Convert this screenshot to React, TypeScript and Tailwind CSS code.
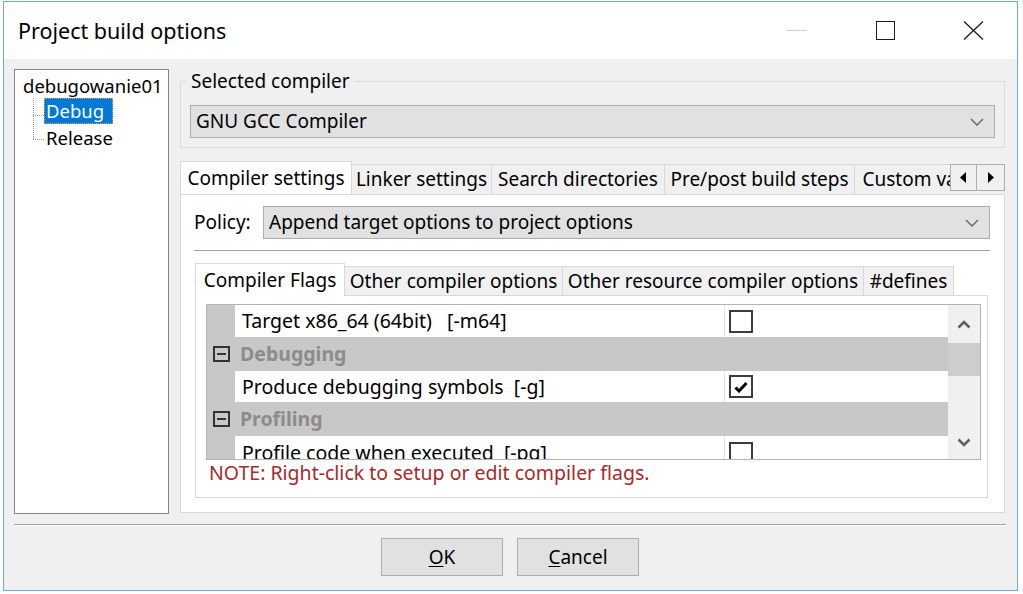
import React from 'react';

const font = "font-['Noto_Sans',sans-serif]";

function ComboChevron() {
  return (
    <svg width="14" height="8" viewBox="0 0 14 8" className="shrink-0">
      <path d="M1 1 L7 7 L13 1" fill="none" stroke="#666" strokeWidth="1.4" />
    </svg>
  );
}

function Combo({ text, className }: { text: string; className?: string }) {
  return (
    <div className={`flex h-[33px] items-center border border-[#adadad] bg-[#e1e1e1] pl-[5px] pr-[10px] ${className ?? ''}`}>
      <span className="flex-1 text-[19px] leading-none text-black">{text}</span>
      <ComboChevron />
    </div>
  );
}

function ScrollChevron({ up }: { up?: boolean }) {
  return (
    <svg width="14" height="9" viewBox="0 0 14 9">
      <path d={up ? 'M1.5 7.5 L7 2 L12.5 7.5' : 'M1.5 1.5 L7 7 L12.5 1.5'} fill="none" stroke="#606060" strokeWidth="2.6" />
    </svg>
  );
}

function MinusBox() {
  return (
    <div className="flex h-[16px] w-[17px] items-center justify-center border-2 border-[#333]">
      <div className="h-[2px] w-[9px] bg-[#333]" />
    </div>
  );
}

function Checkbox({ checked }: { checked?: boolean }) {
  return (
    <div className="flex h-[23px] w-[24px] items-center justify-center border-2 border-[#3c3c3c] bg-white">
      {checked && (
        <svg width="14" height="12" viewBox="0 0 14 12">
          <path d="M1.5 6.5 L5 10 L12.5 2" fill="none" stroke="#000" strokeWidth="3" />
        </svg>
      )}
    </div>
  );
}

function PropRow({ label, checked, h }: { label: string; checked?: boolean; h: string }) {
  return (
    <div className={`flex ${h} shrink-0`}>
      <div className="w-[28px] shrink-0 bg-[#c8c8c8]" />
      <div className="flex w-[489px] shrink-0 items-center overflow-hidden bg-white pl-[7px] text-[19.5px] leading-none text-black whitespace-pre">
        {label}
      </div>
      <div className="flex flex-1 items-center border-l border-[#e3e3e3] bg-white pl-[4px]">
        <Checkbox checked={checked} />
      </div>
    </div>
  );
}

function CategoryRow({ label, h }: { label: string; h: string }) {
  return (
    <div className={`flex ${h} shrink-0 items-center bg-[#c8c8c8] pl-[6px]`}>
      <MinusBox />
      <span className="ml-[10px] text-[19.5px] font-bold leading-none text-[#8c8c8c]">{label}</span>
    </div>
  );
}

export default function App() {
  const outerTabs = [
    { label: 'Linker settings', w: 'w-[140px]' },
    { label: 'Search directories', w: 'w-[173px]' },
    { label: 'Pre/post build steps', w: 'w-[190px]' },
    { label: 'Custom variables', w: 'w-[170px]' },
  ];
  const innerTabs = [
    { label: 'Other compiler options', w: 'w-[218px]' },
    { label: 'Other resource compiler options', w: 'w-[301px]' },
    { label: '#defines', w: 'w-[90px]' },
  ];

  return (
    <div className={`h-[594px] w-[1023px] overflow-hidden bg-white pl-[3px] pt-[1px] ${font}`}>
      <div className="flex h-[590px] w-[1015px] flex-col border border-[#6fa8dc] bg-[#f0f0f0]">
        {/* Title bar */}
        <div className="flex h-[57px] shrink-0 items-center bg-white pl-[14px]">
          <span className="flex-1 text-[21.5px] leading-none text-black">Project build options</span>
          <div className="flex h-full w-[88px] items-center justify-center">
            <div className="h-px w-[20px] bg-[#cfcfcf]" />
          </div>
          <div className="flex h-full w-[88px] items-center justify-center">
            <div className="h-[19px] w-[19px] border-[1.5px] border-[#1a1a1a]" />
          </div>
          <div className="flex h-full w-[88px] items-center justify-center">
            <svg width="21" height="19" viewBox="0 0 21 19">
              <path d="M1 0.5 L20 18.5 M20 0.5 L1 18.5" stroke="#222" strokeWidth="1.4" fill="none" />
            </svg>
          </div>
        </div>

        {/* Body */}
        <div className="flex flex-1 flex-col pl-[10px] pr-[11px] pt-[10px]">
          <div className="flex h-[445px] gap-[11px]">
            {/* Target tree */}
            <div className="w-[155px] shrink-0 border border-[#828790] bg-white pl-[8px] pt-[4px] text-[18.5px] leading-none text-black">
              <div className="flex h-[24px] items-center">debugowanie01</div>
              <div className="flex">
                <div className="relative w-[21px] shrink-0">
                  <div className="absolute left-[10px] top-0 h-[41px] border-l border-dotted border-[#9a9a9a]" />
                  <div className="absolute left-[10px] top-[17px] w-[11px] border-t border-dotted border-[#9a9a9a]" />
                  <div className="absolute left-[10px] top-[41px] w-[11px] border-t border-dotted border-[#9a9a9a]" />
                </div>
                <div className="flex flex-col">
                  <div className="flex h-[26px] items-center border border-dotted border-[#e2a85a] bg-[#0078d7] px-[1px] text-white">Debug</div>
                  <div className="flex h-[29px] items-center pl-[2px]">Release</div>
                </div>
              </div>
            </div>

            {/* Right column */}
            <div className="flex w-[825px] min-w-0 shrink-0 flex-col">
              <fieldset className="h-[79px] min-w-0 border border-[#dcdcdc]">
                <legend className="ml-[6px] h-[24px] px-[4px] text-[19px] leading-[24px] text-black">Selected compiler</legend>
                <Combo text="GNU GCC Compiler" className="mx-[9px] mt-[12px]" />
              </fieldset>

              {/* Outer tabs */}
              <div className="mt-[13px] flex h-[33px] items-end">
                <div className="flex min-w-0 flex-1 items-end overflow-hidden">
                  <div className="relative z-10 -mb-px flex h-[34px] w-[172px] shrink-0 items-center justify-center border-x border-t border-[#d9d9d9] bg-white text-[19px] leading-none text-black">
                    Compiler settings
                  </div>
                  {outerTabs.map((t) => (
                    <div
                      key={t.label}
                      className={`flex h-[30px] ${t.w} shrink-0 items-center justify-center whitespace-nowrap border-r border-t border-[#d9d9d9] bg-[#f0f0f0] text-[19px] leading-none text-black`}
                    >
                      {t.label}
                    </div>
                  ))}
                </div>
                <div className="mb-[3px] flex h-[27px] shrink-0">
                  <div className="flex w-[27px] items-center justify-center border border-[#adadad] bg-[#f0f0f0]">
                    <svg width="7" height="11" viewBox="0 0 7 11"><path d="M6 0 L0 5.5 L6 11 Z" fill="#000" /></svg>
                  </div>
                  <div className="flex w-[28px] items-center justify-center border border-l-0 border-[#adadad] bg-[#f0f0f0]">
                    <svg width="7" height="11" viewBox="0 0 7 11"><path d="M1 0 L7 5.5 L1 11 Z" fill="#000" /></svg>
                  </div>
                </div>
              </div>

              {/* Tab panel */}
              <div className="flex h-[319px] flex-col border border-[#d9d9d9] bg-white pl-[13px] pr-[14px] pt-[11px]">
                <div className="flex h-[33px] items-center">
                  <span className="w-[69px] shrink-0 text-[19px] leading-none text-black">Policy:</span>
                  <Combo text="Append target options to project options" className="flex-1" />
                </div>
                <div className="mt-[11px] border-t border-b border-t-[#a0a0a0] border-b-white" />

                {/* Inner tabs */}
                <div className="ml-px mt-[11px] flex h-[32px] items-end">
                  <div className="relative z-10 -mb-px flex h-[33px] w-[150px] shrink-0 items-center justify-center border-x border-t border-[#d9d9d9] bg-white text-[19px] leading-none text-black">
                    Compiler Flags
                  </div>
                  {innerTabs.map((t) => (
                    <div
                      key={t.label}
                      className={`flex h-[29px] ${t.w} shrink-0 items-center justify-center whitespace-nowrap border-r border-t border-[#d9d9d9] bg-[#f0f0f0] text-[19px] leading-none text-black`}
                    >
                      {t.label}
                    </div>
                  ))}
                </div>

                <div className="ml-px mr-[2px] flex h-[203px] flex-col border border-[#d9d9d9] bg-white pl-[10px] pt-[8px]">
                  {/* Property grid */}
                  <div className="flex h-[156px] w-[775px] border border-[#b4b4b4]">
                    <div className="flex flex-1 flex-col overflow-hidden">
                      <PropRow label="Target x86_64 (64bit)   [-m64]" h="h-[32px]" />
                      <CategoryRow label="Debugging" h="h-[34px]" />
                      <PropRow label="Produce debugging symbols  [-g]" checked h="h-[31px]" />
                      <CategoryRow label="Profiling" h="h-[34px]" />
                      <PropRow label="Profile code when executed  [-pg]" h="h-[34px]" />
                    </div>
                    <div className="flex w-[32px] shrink-0 flex-col bg-[#f0f0f0]">
                      <div className="flex h-[38px] items-center justify-center">
                        <ScrollChevron up />
                      </div>
                      <div className="h-[33px] bg-[#cdcdcd]" />
                      <div className="flex-1" />
                      <div className="flex h-[34px] items-center justify-center">
                        <ScrollChevron />
                      </div>
                    </div>
                  </div>
                  <div className="flex h-[26px] items-center pl-[3px] text-[19.5px] leading-none text-[#a52a2a]">
                    NOTE: Right-click to setup or edit compiler flags.
                  </div>
                </div>
              </div>
            </div>
          </div>

          <div className="mt-[10px] border-t border-b border-t-[#a0a0a0] border-b-white" />

          {/* Buttons */}
          <div className="mt-[12px] flex justify-center gap-[14px]">
            <button className="flex h-[38px] w-[122px] items-center justify-center border border-[#adadad] bg-[#e1e1e1] text-[19px] leading-none text-black">
              <span><span className="underline underline-offset-2">O</span>K</span>
            </button>
            <button className="flex h-[38px] w-[122px] items-center justify-center border border-[#adadad] bg-[#e1e1e1] text-[19px] leading-none text-black">
              <span><span className="underline underline-offset-2">C</span>ancel</span>
            </button>
          </div>
        </div>
      </div>
    </div>
  );
}
